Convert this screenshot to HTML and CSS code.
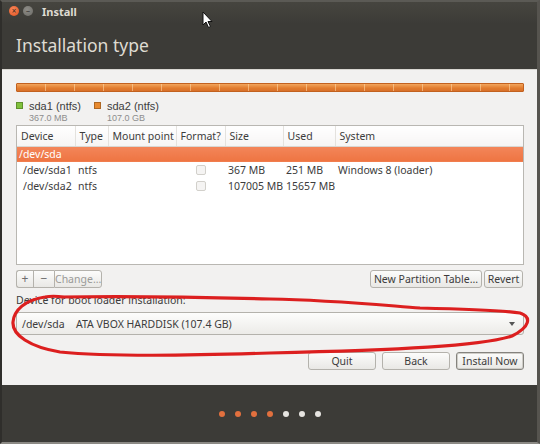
FILE: index.html
```html
<!DOCTYPE html>
<html lang="en">
<head>
  <meta charset="UTF-8">
  <title>Install</title>
  <link rel="stylesheet" href="styles.css">
</head>
<body>
  <div class="window">
    <div class="header">
      <div class="titlebar">
        <span class="win-btn close">&#215;</span>
        <span class="win-btn minimize">&#8211;</span>
        <span class="title">Install</span>
      </div>
      <h1>Installation type</h1>
    </div>

    <div class="content">
      <div class="disk-bar"></div>

      <div class="legend">
        <div class="legend-item">
          <span class="swatch green"></span>
          <div>
            <div class="part-name">sda1 (ntfs)</div>
            <div class="part-size">367.0 MB</div>
          </div>
        </div>
        <div class="legend-item">
          <span class="swatch orange"></span>
          <div>
            <div class="part-name">sda2 (ntfs)</div>
            <div class="part-size">107.0 GB</div>
          </div>
        </div>
      </div>

      <div class="tree">
        <table>
          <colgroup>
            <col class="c-device"><col class="c-type"><col class="c-mount"><col class="c-format">
            <col class="c-size"><col class="c-used"><col>
          </colgroup>
          <thead>
            <tr>
              <th>Device</th><th>Type</th><th>Mount point</th><th>Format?</th>
              <th>Size</th><th>Used</th><th class="last">System</th>
            </tr>
          </thead>
          <tbody>
            <tr class="selected">
              <td class="disk">/dev/sda</td><td></td><td></td><td></td><td></td><td></td><td></td>
            </tr>
            <tr>
              <td class="child">/dev/sda1</td><td>ntfs</td><td></td>
              <td class="check"><span class="checkbox"></span></td>
              <td>367 MB</td><td>251 MB</td><td>Windows 8 (loader)</td>
            </tr>
            <tr>
              <td class="child">/dev/sda2</td><td>ntfs</td><td></td>
              <td class="check"><span class="checkbox"></span></td>
              <td>107005 MB</td><td>15657 MB</td><td></td>
            </tr>
          </tbody>
        </table>
      </div>

      <div class="tools">
        <div class="btn-group">
          <button class="small">+</button>
          <button class="small minus">&#8722;</button>
          <button class="small disabled">Change...</button>
        </div>
        <div class="tools-right">
          <button class="new-table">New Partition Table...</button>
          <button class="revert">Revert</button>
        </div>
      </div>

      <p class="boot-label">Device for boot loader installation:</p>
      <div class="combo">
        <span class="dev">/dev/sda</span>
        <span>ATA VBOX HARDDISK (107.4 GB)</span>
        <span class="arrow"></span>
      </div>

      <div class="actions">
        <button class="action">Quit</button>
        <button class="action">Back</button>
        <button class="action default">Install Now</button>
      </div>
    </div>

    <div class="footer">
      <span class="dot done"></span>
      <span class="dot done"></span>
      <span class="dot done"></span>
      <span class="dot done"></span>
      <span class="dot"></span>
      <span class="dot"></span>
      <span class="dot"></span>
    </div>
  </div>

  <!-- mouse pointer -->
  <svg class="cursor" width="12" height="18" viewBox="0 0 12 18">
    <path d="M1 1 L1 14 L4 11 L6.5 16.5 L8.5 15.5 L6 10.5 L10 10.5 Z" fill="#fff" stroke="#111" stroke-width="1" stroke-linejoin="round"/>
  </svg>

  <!-- red hand drawn circle -->
  <svg class="scribble" width="540" height="444" viewBox="0 0 540 444">
    <path d="M60 297 C120 296, 200 297, 270 299 C330 300, 380 305, 420 308 C460 309, 500 310, 520 313 C532 317, 530 327, 512 336 C480 346, 400 350, 270 353 C180 356, 100 356, 60 352 C30 347, 12 335, 13 322 C14 310, 25 300, 45 297 C50 296, 56 296, 64 297"
          fill="none" stroke="#dc1f1f" stroke-width="3.2" stroke-linecap="round"/>
  </svg>
</body>
</html>
```

FILE: styles.css
```css
/* Reset */
* {
  margin: 0;
  padding: 0;
  box-sizing: border-box;
}

body {
  width: 540px;
  height: 444px;
  overflow: hidden;
  position: relative;
  font-family: "Noto Sans", "DejaVu Sans", sans-serif;
  font-size: 10.5px;
  color: #3c3c3c;
  background: #2f2e2b;
}

.window {
  display: flex;
  flex-direction: column;
  height: 444px;
  border-top: 2px solid #5b5a55;
  border-left: 2px solid #2f2e2b;
  border-right: 3px solid #56544f;
  border-bottom: 2px solid #8b8984;
}

/* Header */
.header {
  height: 67px;
  background: linear-gradient(#46453f, #3c3b37 22px);
}

.titlebar {
  display: flex;
  align-items: center;
  height: 18px;
  padding-left: 7px;
}

.win-btn {
  width: 10px;
  height: 10px;
  border-radius: 50%;
  margin-right: 4px;
  font-size: 8px;
  line-height: 10px;
  text-align: center;
  color: #3a2a20;
}

.close {
  background: radial-gradient(circle at 40% 35%, #f7875a, #e0501e);
}

.minimize {
  background: radial-gradient(circle at 40% 35%, #8e8d88, #6c6b66);
  color: #3c3b37;
}

.title {
  margin-left: 5px;
  font-size: 11px;
  font-weight: bold;
  color: #dfdbd2;
}

h1 {
  margin: 13px 0 0 14px;
  font-size: 17.5px;
  font-weight: normal;
  line-height: 24px;
  color: #dfdbd2;
}

/* Content */
.content {
  flex: 1;
  background: #f2f1f0;
  border-top: 1px solid #d8d6d1;
  padding: 13px 13px 0 14px;
}

.disk-bar {
  height: 9px;
  border: 1px solid #c2611f;
  border-radius: 1px;
  background:
    repeating-linear-gradient(90deg, transparent 0 28px, rgba(255, 220, 170, 0.55) 28px 29px),
    linear-gradient(#f2a55c, #e17b2d 60%, #d8702a);
}

.legend {
  display: flex;
  margin-top: 8px;
}

.legend-item {
  display: flex;
  margin-right: 13px;
}

.swatch {
  width: 7px;
  height: 7px;
  margin: 2px 6px 0 0;
  border: 1px solid rgba(0, 0, 0, 0.25);
}

.swatch.green { background: #80c13c; }
.swatch.orange { background: #e88a2f; }

.part-name,
.part-size {
  font-family: "Liberation Sans", Arial, sans-serif;
  line-height: 12px;
}

.part-name {
  font-size: 11px;
  color: #3c3c3c;
}

.part-size {
  font-size: 9px;
  color: #8d8d8d;
}

/* Partition list */
.tree {
  margin-top: 1px;
  height: 140px;
  background: #fff;
  border: 1px solid #b9b7b2;
}

table {
  width: 100%;
  table-layout: fixed;
  border-collapse: collapse;
}

.c-device { width: 58px; }
.c-type { width: 33px; }
.c-mount { width: 68px; }
.c-format { width: 49px; }
.c-size { width: 58px; }
.c-used { width: 52px; }

th {
  height: 20px;
  padding-left: 4px;
  text-align: left;
  font-weight: normal;
  white-space: nowrap;
  background: linear-gradient(#ffffff, #f6f5f4);
  border-right: 1px solid #e4e2de;
  border-bottom: 1px solid #d9d7d2;
}

th.last { border-right: none; }

td {
  height: 16px;
  padding-left: 3px;
  white-space: nowrap;
  overflow: hidden;
}

td.disk { padding-left: 2px; }
td.child { padding-left: 6px; }

tr.selected td {
  background: linear-gradient(#f3865a, #ee7442);
  color: #fff;
}

td.check {
  text-align: center;
  padding-left: 0;
}

.checkbox {
  display: inline-block;
  width: 10px;
  height: 10px;
  margin-top: 3px;
  border: 1px solid #d2d0cb;
  border-radius: 2px;
  background: #f5f4f3;
}

/* Buttons */
button {
  font-family: inherit;
  font-size: 10.5px;
  color: #3c3c3c;
  background: linear-gradient(#fcfcfb, #e9e8e5);
  border: 1px solid #b4b2ac;
  border-radius: 3px;
}

.tools {
  display: flex;
  justify-content: space-between;
  margin-top: 5px;
  height: 18px;
}

.btn-group {
  display: flex;
}

.btn-group .small {
  height: 18px;
  border-radius: 0;
  border-right: none;
  font-size: 12px;
  line-height: 14px;
  color: #6e6e6e;
}

.btn-group .small:first-child {
  width: 17px;
  border-radius: 3px 0 0 3px;
}

.btn-group .minus { width: 21px; }

.btn-group .disabled {
  width: 48px;
  font-size: 10.5px;
  color: #9a9a98;
  border-right: 1px solid #b4b2ac;
  border-radius: 0 3px 3px 0;
}

.tools-right {
  display: flex;
  gap: 2px;
  margin-right: 1px;
}

.new-table { width: 112px; height: 18px; }
.revert { width: 39px; height: 18px; }

.boot-label {
  margin-top: 5px;
  line-height: 14px;
}

.combo {
  display: flex;
  align-items: center;
  margin-top: 5px;
  height: 23px;
  padding-left: 5px;
  border: 1px solid #b4b2ac;
  border-radius: 3px;
  background: linear-gradient(#fdfdfc, #ecebe8);
}

.combo .dev { width: 54px; }

.combo .arrow {
  margin-left: auto;
  margin-right: 8px;
  border-left: 3px solid transparent;
  border-right: 3px solid transparent;
  border-top: 4px solid #555;
}

.actions {
  display: flex;
  justify-content: flex-end;
  gap: 6px;
  margin-top: 17px;
}

.action {
  width: 68px;
  height: 18px;
}

.action.default {
  border-color: #85837e;
  box-shadow: inset 0 0 0 1px #cfcdc8;
}

/* Footer */
.footer {
  display: flex;
  justify-content: center;
  align-items: center;
  gap: 10px;
  height: 57px;
  background: #3c3b37;
}

.dot {
  width: 6px;
  height: 6px;
  border-radius: 50%;
  background: #e6e4e0;
}

.dot.done { background: #e2703e; }

/* Overlays */
.cursor {
  position: absolute;
  left: 202px;
  top: 11px;
}

.scribble {
  position: absolute;
  left: 0;
  top: 0;
  pointer-events: none;
}
```
